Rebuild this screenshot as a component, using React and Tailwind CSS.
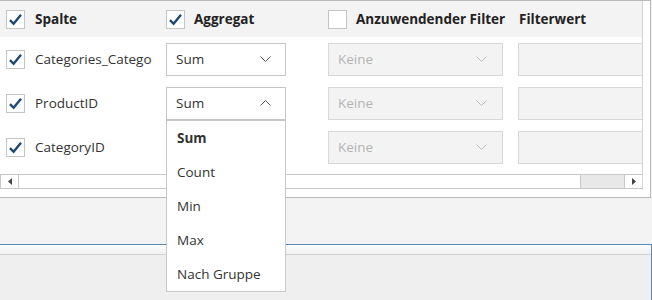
import React from "react";

const font = { fontFamily: '"Segoe UI", "Open Sans", "Noto Sans", sans-serif' };

function Check({ checked }) {
  return (
    <div className="w-[19px] h-[19px] border border-[#c4c4c4] bg-white flex items-center justify-center shrink-0">
      {checked && (
        <svg width="15" height="13" viewBox="0 0 15 13">
          <path d="M2 7.2 L5.6 10.8 L13 1.8" fill="none" stroke="#1c4a75" strokeWidth="2.4" />
        </svg>
      )}
    </div>
  );
}

function Chevron({ up, color = "#555" }) {
  return (
    <svg width="11" height="6" viewBox="0 0 11 6" className="shrink-0">
      <path d={up ? "M0.5 5.5 L5.5 0.5 L10.5 5.5" : "M0.5 0.5 L5.5 5.5 L10.5 0.5"} fill="none" stroke={color} strokeWidth="1" />
    </svg>
  );
}

function Combo({ open, covered }) {
  return (
    <div className={`w-[120px] h-[33px] border border-[#c6c6c6] bg-white flex items-center justify-between pl-[9px] pr-[14px] text-[13.5px] text-[#333] ${covered ? "invisible" : ""}`}>
      <span>Sum</span>
      <Chevron up={open} />
    </div>
  );
}

function FilterCombo() {
  return (
    <div className="w-[175px] h-[33px] border border-[#d8d8d8] bg-[#f3f3f3] flex items-center justify-between pl-[9px] pr-[15px] text-[13.5px] text-[#b3b3b3]">
      <span>Keine</span>
      <Chevron color="#bdbdbd" />
    </div>
  );
}

function Row({ label, open, covered }) {
  return (
    <div className="h-[44px] grid grid-cols-[160px_162px_190px_1fr] items-center">
      <div className="pl-[6px] flex items-center gap-[10px] overflow-hidden whitespace-nowrap text-[13.5px] text-[#333]">
        <Check checked />
        <span>{label}</span>
      </div>
      <div className="pl-[6px]">
        <Combo open={open} covered={covered} />
      </div>
      <div className="pl-[6px]">
        <FilterCombo />
      </div>
      <div className="pl-[6px]">
        <div className="w-[150px] h-[33px] border border-[#d8d8d8] bg-[#f3f3f3]" />
      </div>
    </div>
  );
}

export default function App() {
  const items = ["Sum", "Count", "Min", "Max", "Nach Gruppe"];
  return (
    <div className="relative w-[652px] h-[300px] bg-[#f3f3f3] overflow-hidden" style={font}>
      {/* Grid panel */}
      <div className="w-[651px] h-[198px] bg-white border-t border-r border-b border-[#b8b8b8] flex">
        <div className="w-[643px] h-[189px] border-r border-[#d4d4d4] flex flex-col overflow-hidden">
          <div className="h-[36px] shrink-0 bg-[#f3f3f3] grid grid-cols-[160px_162px_190px_1fr] items-center text-[13.5px] font-bold text-[#222] whitespace-nowrap">
            <div className="pl-[6px] flex items-center gap-[10px]">
              <Check checked />
              <span>Spalte</span>
            </div>
            <div className="pl-[6px] flex items-center gap-[9px]">
              <Check checked />
              <span>Aggregat</span>
            </div>
            <div className="pl-[6px] flex items-center gap-[9px]">
              <Check />
              <span>Anzuwendender Filter</span>
            </div>
            <div className="pl-[7px]">Filterwert</div>
          </div>
          <Row label="Categories_Catego" />
          <Row label="ProductID" open />
          <Row label="CategoryID" covered />
          <div className="mt-[5px] h-[15px] shrink-0 flex border-t border-b border-[#c8c8c8] bg-[#e8e8e8]">
            <div className="w-[19px] flex items-center justify-center bg-white border-r border-[#c8c8c8] border-l">
              <svg width="4" height="7" viewBox="0 0 4 7">
                <path d="M4 0 L0 3.5 L4 7 Z" fill="#444" />
              </svg>
            </div>
            <div className="w-[562px] bg-white border-r border-[#c8c8c8]" />
            <div className="flex-1" />
            <div className="w-[18px] flex items-center justify-center bg-white border-l border-[#c8c8c8]">
              <svg width="4" height="7" viewBox="0 0 4 7">
                <path d="M0 0 L4 3.5 L0 7 Z" fill="#444" />
              </svg>
            </div>
          </div>
        </div>
      </div>

      {/* Lower area */}
      <div className="h-[46px]" />
      <div className="w-[652px] h-[56px] border-t border-r border-[#5a87b3] flex flex-col">
        <div className="h-[10px] bg-gradient-to-b from-white to-[#f0f0f0] border-b border-[#d2d2d2]" />
        <div className="flex-1 bg-[#efefef]" />
      </div>

      {/* Open dropdown */}
      <div className="absolute left-[166px] top-[120px] w-[120px] h-[172px] bg-white border border-[#c8c8c8] text-[13.5px] text-[#333]">
        {items.map((it, i) => (
          <div key={it} className={`h-[34px] flex items-center pl-[10px] ${i === 0 ? "font-bold" : ""}`}>
            {it}
          </div>
        ))}
      </div>
    </div>
  );
}
